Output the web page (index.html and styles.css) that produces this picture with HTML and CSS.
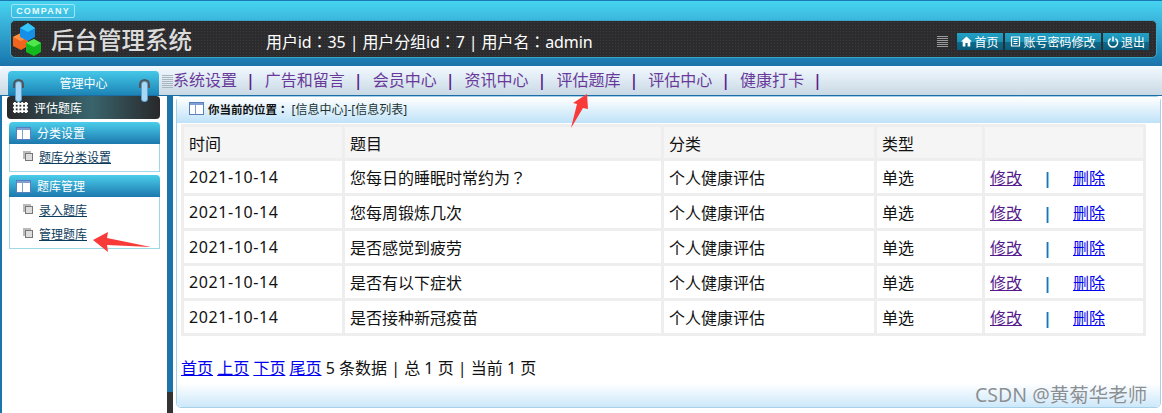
FILE: index.html
```html
<!DOCTYPE html>
<html lang="zh-CN">
<head>
  <meta charset="UTF-8">
  <title>后台管理系统</title>
  <link rel="stylesheet" href="styles.css">
</head>
<body>
  <div id="top">
    <div class="company">COMPANY</div>
    <div class="top-bar">
      <svg class="logo" width="30" height="34" viewBox="0 0 30 34">
        <polygon points="0,15 8,11 15,15 15,24 8,28 0,24" fill="#f0641e"/>
        <polygon points="0,15 8,11 15,15 8,19" fill="#ff9040"/>
        <polygon points="13,21 21,17 28,21 28,30 21,34 13,30" fill="#12b81e"/>
        <polygon points="13,21 21,17 28,21 21,25" fill="#4ee84a"/>
        <polygon points="7,6 15,1 22,6 22,15 15,19 7,15" fill="#1590e8"/>
        <polygon points="7,6 15,1 22,6 15,10" fill="#35c4f8"/>
      </svg>
      <div class="site-name">后台管理系统</div>
      <div class="user-info">用户id<span class="tc" lang="zh-TW">：</span>35 | 用户分组id<span class="tc" lang="zh-TW">：</span>7 | 用户名<span class="tc" lang="zh-TW">：</span>admin</div>
      <div class="top-links">
        <span class="lines"></span>
        <a class="top-btn btn-s" href="#">
          <svg width="11" height="11" viewBox="0 0 11 11"><path d="M5.5 0.5 L11 5.5 H9.3 V10.5 H6.6 V7 H4.4 V10.5 H1.7 V5.5 H0 Z" fill="#fff"/></svg>首页
        </a>
        <a class="top-btn btn-l" href="#">
          <svg width="11" height="11" viewBox="0 0 11 11"><path d="M1.5 1 H9.5 V10 H1.5 Z M3.5 3.5 H7.5 M3.5 5.5 H7.5 M3.5 7.5 H7.5" fill="none" stroke="#fff" stroke-width="1.2"/></svg>账号密码修改
        </a>
        <a class="top-btn btn-s" href="#">
          <svg width="12" height="12" viewBox="0 0 12 12"><path d="M3.6 2.6 A4.6 4.6 0 1 0 8.4 2.6 M6 0.5 V5.5" fill="none" stroke="#fff" stroke-width="1.5"/></svg>退出
        </a>
      </div>
    </div>
  </div>

  <div id="menu">
    <div class="side-title">管理中心</div>
    <span class="grip"></span>
    <div class="menu-links">
      <a href="#">系统设置</a><i>|</i>
      <a href="#">广告和留言</a><i>|</i>
      <a href="#">会员中心</a><i>|</i>
      <a href="#">资讯中心</a><i>|</i>
      <a href="#">评估题库</a><i>|</i>
      <a href="#">评估中心</a><i>|</i>
      <a href="#">健康打卡</a><i>|</i>
    </div>
  </div>

  <div id="content">
    <div id="side">
      <div class="side-current">
        <span class="dots"></span>评估题库
      </div>
      <div class="side-box">
        <div class="box-head"><span class="box-icon"></span>分类设置</div>
        <ul class="box-list">
          <li><span class="page-icon"></span><a href="#">题库分类设置</a></li>
        </ul>
      </div>
      <div class="side-box">
        <div class="box-head"><span class="box-icon"></span>题库管理</div>
        <ul class="box-list">
          <li><span class="page-icon"></span><a href="#">录入题库</a></li>
          <li><span class="page-icon"></span><a href="#">管理题库</a></li>
        </ul>
      </div>
    </div>
    <div id="divider"></div>
    <div id="main">
      <div class="where">
        <span class="where-icon"></span><b>你当前的位置<span class="tc" lang="zh-TW">：</span></b>[信息中心]-[信息列表]
      </div>
      <table id="list">
        <thead>
          <tr><th class="c1">时间</th><th class="c2">题目</th><th class="c3">分类</th><th class="c4">类型</th><th class="c5"></th></tr>
        </thead>
        <tbody>
          <tr><td class="date">2021-10-14</td><td>您每日的睡眠时常约为<span class="tc" lang="zh-TW">？</span></td><td>个人健康评估</td><td>单选</td><td class="ops"><a class="seen" href="#">修改</a><i>|</i><a href="#">删除</a></td></tr>
          <tr><td class="date">2021-10-14</td><td>您每周锻炼几次</td><td>个人健康评估</td><td>单选</td><td class="ops"><a class="seen" href="#">修改</a><i>|</i><a href="#">删除</a></td></tr>
          <tr><td class="date">2021-10-14</td><td>是否感觉到疲劳</td><td>个人健康评估</td><td>单选</td><td class="ops"><a class="seen" href="#">修改</a><i>|</i><a href="#">删除</a></td></tr>
          <tr><td class="date">2021-10-14</td><td>是否有以下症状</td><td>个人健康评估</td><td>单选</td><td class="ops"><a class="seen" href="#">修改</a><i>|</i><a href="#">删除</a></td></tr>
          <tr><td class="date">2021-10-14</td><td>是否接种新冠疫苗</td><td>个人健康评估</td><td>单选</td><td class="ops"><a class="seen" href="#">修改</a><i>|</i><a href="#">删除</a></td></tr>
        </tbody>
      </table>
      <div class="pager">
        <a href="#">首页</a> <a href="#">上页</a> <a href="#">下页</a> <a href="#">尾页</a> 5 条数据 | 总 1 页 | 当前 1 页
      </div>
      <div class="main-foot"></div>
    </div>
  </div>

  <span class="ring ring-left"></span>
  <span class="ring ring-right"></span>

  <svg class="arrow arrow-up" width="20" height="34" viewBox="0 0 20 34"><polygon points="17,0 18,15 13,14 1,34 7,10 3,9" fill="#f83a38"/></svg>
  <svg class="arrow arrow-left" width="60" height="20" viewBox="0 0 60 20"><polygon points="0,8 15,0 14,6 58,15 14,13 15,20" fill="#f83a38"/></svg>
  <div class="mark">CSDN @黄菊华老师</div>
</body>
</html>
```

FILE: styles.css
```css
html, body {
  margin: 0;
  padding: 0;
  height: 413px;
  overflow: hidden;
}

body {
  position: relative;
  font-family: "Noto Sans", "Noto Sans CJK SC", sans-serif;
  font-size: 16px;
  color: #111;
  background-color: #fff;
}

a {
  color: #0000ee;
}

/* centred full width punctuation */
.tc {
  font-family: "Noto Sans CJK TC", sans-serif;
}

/* top */
#top {
  height: 66px;
  box-sizing: border-box;
  padding: 3px 5px 0 10px;
  background: linear-gradient(#45d4f0 0, #3cb8de 18px, #1c7fb4 58px, #1c6fa6 66px);
  border-top: 1px solid #1a78b4;
}

.company {
  width: 62px;
  height: 12px;
  margin-left: 1px;
  border: 1px solid #9fe4f4;
  border-radius: 2px;
  color: #e8fbff;
  font-family: "Liberation Sans", sans-serif;
  font-size: 9px;
  font-weight: bold;
  letter-spacing: 1.2px;
  line-height: 12px;
  text-align: center;
}

.top-bar {
  display: flex;
  align-items: center;
  height: 36px;
  margin-top: 2px;
  padding-left: 2px;
  border: 1px solid #3aa6c8;
  border-radius: 5px;
  background-color: #2c2c2e;
  background-image: radial-gradient(#3b3b3d 1px, transparent 1px);
  background-size: 3px 3px;
}

.logo {
  flex: none;
}

.site-name {
  margin-left: 8px;
  color: #dcdcdc;
  font-size: 23.5px;
  font-weight: 500;
}

.user-info {
  margin: 4px 0 0 74px;
  color: #fff;
  letter-spacing: -.1px;
}

.top-links {
  display: flex;
  align-items: center;
  gap: 2px;
  margin: 5px 7px 0 auto;
}

.lines {
  width: 11px;
  height: 11px;
  margin-right: 7px;
  background: repeating-linear-gradient(#9a9a9a 0, #9a9a9a 1px, transparent 1px, transparent 2px);
}

.top-btn {
  display: flex;
  align-items: center;
  justify-content: center;
  gap: 2px;
  height: 17px;
  background: linear-gradient(#22a0c4, #1a90b4 50%, #0c6a8a 55%, #0a5c7a);
  color: #fff;
  font-size: 12px;
  text-decoration: none;
}

.btn-s {
  width: 46px;
}

.btn-l {
  width: 96px;
}

/* menu row */
#menu {
  display: flex;
  height: 30px;
  box-sizing: border-box;
  padding-left: 8px;
  border-radius: 5px 0 0 0;
  border-bottom: 1px solid #1c6fa6;
  background: linear-gradient(#f2f9ff, #c9d9e5);
}

.side-title {
  width: 151px;
  height: 24px;
  margin-top: 5px;
  border-radius: 4px 4px 0 0;
  background: linear-gradient(#45c8e8, #1c84b6);
  color: #fff;
  font-size: 12px;
  line-height: 25px;
  text-align: center;
}

.grip {
  width: 11px;
  height: 13px;
  margin: 9px 0 0 3px;
  background: repeating-linear-gradient(#a9b6c0 0, #a9b6c0 1px, transparent 1px, transparent 2px);
}

.menu-links {
  display: flex;
  gap: 9px;
  line-height: 28px;
  white-space: nowrap;
}

.menu-links a {
  color: #551a8b;
  text-decoration: none;
  opacity: .85;
}

.menu-links i {
  color: #551a8b;
  font-style: normal;
  font-weight: 600;
  margin-right: 1px;
}

/* body of the page */
#content {
  display: flex;
  height: 317px;
  box-sizing: border-box;
  padding-left: 2px;
  background: linear-gradient(90deg, #1c75aa 2px, #fff 2px);
}

#side {
  width: 165px;
  flex: none;
  padding-left: 5px;
  box-sizing: border-box;
}

.side-current {
  display: flex;
  align-items: center;
  width: 153px;
  height: 23px;
  box-sizing: border-box;
  padding-left: 6px;
  border-radius: 4px;
  background-color: #2c2c2e;
  background-image: linear-gradient(90deg, rgba(40,40,42,.9), rgba(60,110,120,.85) 55%, rgba(40,40,42,.9));
  color: #fff;
  font-size: 12px;
}

.dots {
  width: 15px;
  height: 11px;
  margin-right: 6px;
  background-image: radial-gradient(#fff 1.6px, transparent 1.8px);
  background-size: 3.7px 3.7px;
}

.side-box {
  width: 151px;
  margin: 3px 0 0 2px;
}

.box-head {
  display: flex;
  align-items: center;
  height: 22px;
  padding-left: 7px;
  border-radius: 4px 4px 0 0;
  background: linear-gradient(#4bcdea, #1c78ae);
  color: #fff;
  font-size: 12px;
}

.box-icon,
.where-icon {
  width: 13px;
  height: 11px;
  margin-right: 6px;
  border: 1px solid #5a7fc0;
  background:
    linear-gradient(#7f9fd0 2px, transparent 2px),
    linear-gradient(90deg, #fff 35%, #7f9fd0 35%, #7f9fd0 45%, #fff 45%);
}

.box-list {
  list-style: none;
  margin: 0;
  padding: 1px 0 2px;
  border: 1px solid #9fd8e6;
  border-top: 0;
  background-color: #fff;
}

.box-list li {
  display: flex;
  align-items: center;
  height: 24px;
  padding-left: 15px;
  font-size: 12px;
}

.box-list a {
  color: #0c3c5c;
}

.page-icon {
  width: 6px;
  height: 6px;
  margin-right: 6px;
  border: 1px solid #777;
  box-shadow: -2px -2px 0 #bbb;
  background-color: #ddd;
}

#divider {
  width: 6px;
  flex: none;
  background-color: #1c75aa;
  background-image: linear-gradient(transparent 296px, #333 296px);
}

#main {
  display: flex;
  flex-direction: column;
  width: 985px;
  height: 312px;
  margin-left: 3px;
  box-sizing: border-box;
  border: 1px solid #a6cfe8;
  border-radius: 5px;
  background-color: #fff;
}

.where {
  display: flex;
  align-items: center;
  flex: none;
  height: 26px;
  box-sizing: border-box;
  padding: 0 0 3px 12px;
  background: linear-gradient(#fff, #bfe2f8);
  font-size: 12px;
  color: #233;
}

.where-icon {
  margin-right: 4px;
}

.where b {
  color: #111;
  font-size: 11.5px;
  margin-right: 3px;
}

#list {
  width: 965px;
  margin: 1px 0 0 4px;
  border-collapse: separate;
  border-spacing: 3px;
  background-color: #eeeeee;
  table-layout: fixed;
}

#list th,
#list td {
  height: 32px;
  box-sizing: border-box;
  padding: 0 0 0 5px;
  font-weight: normal;
  text-align: left;
  white-space: nowrap;
  background-color: #fff;
}

#list th {
  height: 31px;
  background-color: #f5f5f5;
}

.c1 { width: 158px; }
.c2 { width: 316px; }
.c3 { width: 210px; }
.c4 { width: 105px; }

#list .date {
  letter-spacing: .6px;
}

.ops i {
  display: inline-block;
  width: 51px;
  color: #0a78c0;
  font-style: normal;
  font-weight: 700;
  text-align: center;
}

.ops a.seen {
  color: #551a8b;
}

.pager {
  margin: 21px 0 0 4px;
  line-height: 22px;
}

.main-foot {
  flex: 1;
  margin-top: 4px;
  background: linear-gradient(#fff, #cce8fa);
  border-radius: 0 0 5px 5px;
}

/* things lying on top */
.ring {
  position: absolute;
  top: 81px;
  width: 7px;
  height: 21px;
  border-radius: 3px;
  background-color: #a9d6f2;
  border: 1px solid #5aa0d0;
  box-sizing: border-box;
}

.ring::before {
  content: "";
  position: absolute;
  top: -3px;
  left: -3px;
  width: 11px;
  height: 9px;
  border: 2px solid #555;
  border-bottom: 0;
  border-radius: 6px 6px 0 0;
  box-sizing: border-box;
}

.ring-left { left: 15px; }
.ring-right { left: 141px; }

.arrow {
  position: absolute;
}

.arrow-up {
  left: 570px;
  top: 94px;
}

.arrow-left {
  left: 93px;
  top: 232px;
}

.mark {
  position: absolute;
  left: 975px;
  top: 379px;
  color: #8a8f94;
  font-size: 19.5px;
  white-space: nowrap;
  text-shadow: 0 0 1px #fff;
}
```
